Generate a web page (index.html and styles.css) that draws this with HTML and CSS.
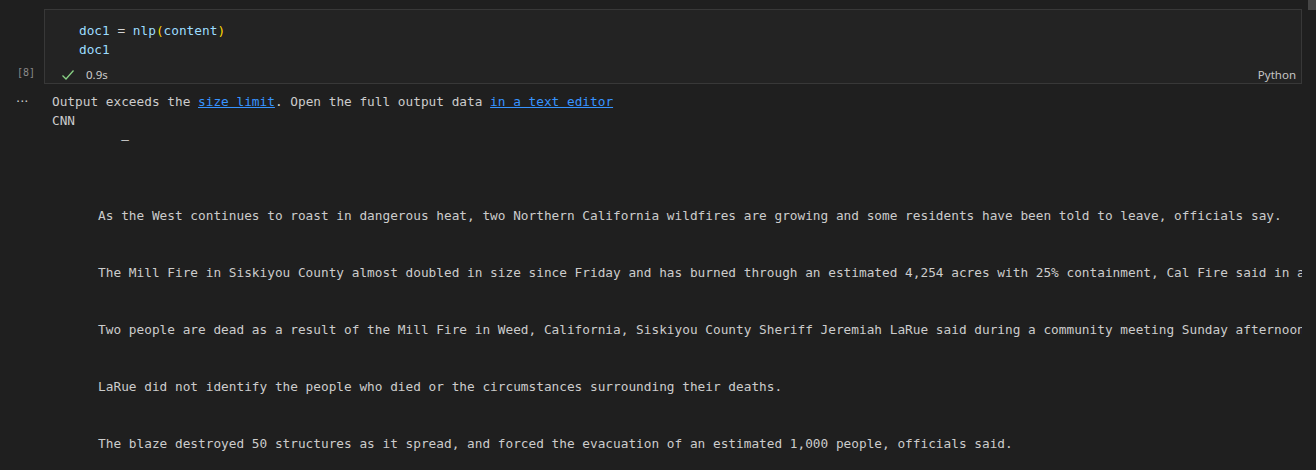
FILE: index.html
```html
<!DOCTYPE html>
<html lang="en">
<head>
<meta charset="utf-8">
<title>Notebook</title>
<link rel="stylesheet" href="styles.css">
</head>
<body>
<div class="scroll-thumb"></div>
<div class="cell">
  <div class="gutter"><span class="exec-count">[8]</span></div>
  <div class="cell-box">
    <div class="code"><div class="code-line"><span class="var">doc1</span> <span class="op">=</span> <span class="var">nlp</span><span class="paren">(</span><span class="var">content</span><span class="paren">)</span></div><div class="code-line"><span class="var">doc1</span></div></div>
    <div class="status">
      <svg class="check" width="14" height="12" viewBox="0 0 14 12"><path d="M1.5 6.5 L5 10 L12.5 1.5" fill="none" stroke="#89d185" stroke-width="1.3"/></svg>
      <span class="time">0.9s</span>
      <span class="lang">Python</span>
    </div>
  </div>
</div>
<div class="output">
  <div class="out-gutter">···</div>
  <div class="out-body">
    <div class="out-line">Output exceeds the <a class="link" href="#">size limit</a>. Open the full output data <a class="link" href="#">in a text editor</a></div>
<pre class="out-text">CNN
         —



      As the West continues to roast in dangerous heat, two Northern California wildfires are growing and some residents have been told to leave, officials say.


      The Mill Fire in Siskiyou County almost doubled in size since Friday and has burned through an estimated 4,254 acres with 25% containment, Cal Fire said in an update.


      Two people are dead as a result of the Mill Fire in Weed, California, Siskiyou County Sheriff Jeremiah LaRue said during a community meeting Sunday afternoon.


      LaRue did not identify the people who died or the circumstances surrounding their deaths.


      The blaze destroyed 50 structures as it spread, and forced the evacuation of an estimated 1,000 people, officials said.


      Meanwhile, the nearby Mountain Fire has grown to more than 5,000 acres.</pre>
  </div>
</div>
</body>
</html>
```

FILE: styles.css
```css
html, body {
  margin: 0;
  padding: 0;
  height: 100%;
  overflow: hidden;
  background: #1f1f1f;
}

body {
  font-family: "DejaVu Sans Mono", "Liberation Mono", monospace;
  color: #cccccc;
  position: relative;
}

.scroll-thumb {
  position: absolute;
  top: 0;
  right: 0;
  width: 8px;
  height: 10px;
  background: #464646;
}

.cell {
  display: flex;
  padding: 9px 14px 0 0;
}

.gutter {
  width: 44px;
  flex: none;
  display: flex;
  align-items: flex-end;
  justify-content: flex-end;
  padding-right: 9px;
  padding-bottom: 3px;
  box-sizing: border-box;
}

.exec-count {
  font-family: "DejaVu Sans Mono", monospace;
  font-size: 10px;
  color: #8a8a8a;
  line-height: 17px;
}

.cell-box {
  flex: 1;
  border: 1px solid #383838;
  background: #232323;
}

.code {
  padding: 11px 0 0 34px;
  font-size: 12.78px;
  line-height: 19px;
}

.code-line {
  height: 19px;
  white-space: pre;
}

.var { color: #9cdcfe; }
.op { color: #d4d4d4; }
.paren { color: #ffd700; }

.status {
  display: flex;
  align-items: center;
  height: 17px;
  padding: 7px 5px 0 16px;
  font-family: "Noto Sans", "Open Sans", sans-serif;
  font-size: 11.5px;
}

.check {
  display: block;
  margin-right: 11px;
}

.time {
  color: #cccccc;
}

.lang {
  margin-left: auto;
  color: #c5c5c5;
}

.output {
  display: flex;
  padding: 8px 14px 0 0;
}

.out-gutter {
  width: 52px;
  flex: none;
  padding-left: 16px;
  box-sizing: border-box;
  font-family: "DejaVu Sans", sans-serif;
  font-size: 13px;
  line-height: 19px;
  color: #cccccc;
  letter-spacing: 0px;
}

.out-body {
  flex: 1;
  overflow: hidden;
  font-size: 12.78px;
  line-height: 19px;
}

.out-line {
  white-space: pre;
}

.link {
  color: #3794ff;
  text-decoration: underline;
}

.out-text {
  margin: 0;
  font-family: inherit;
  font-size: inherit;
  line-height: inherit;
  color: #cccccc;
  white-space: pre;
}
```
